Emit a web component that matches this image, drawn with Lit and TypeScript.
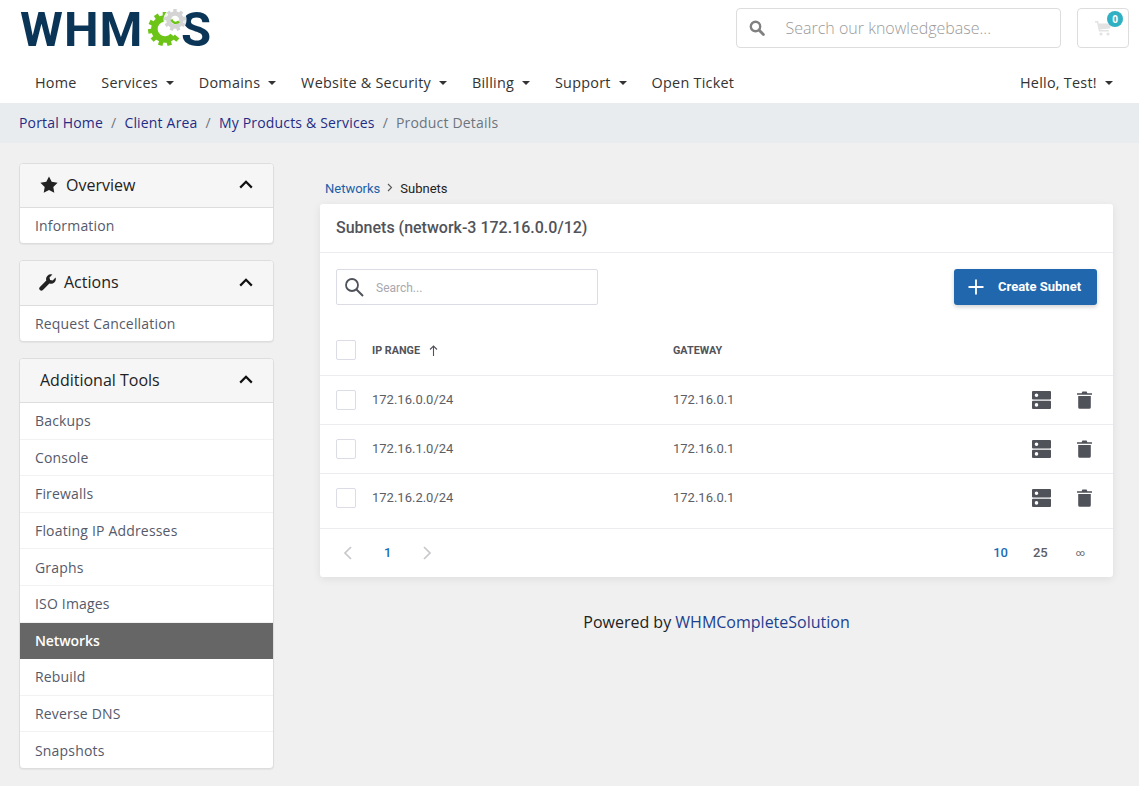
import { LitElement, html, css, svg } from "lit";
import { customElement } from "lit/decorators.js";

const caret = html`<span class="caret"></span>`;
const chevUp = html`<svg class="chev" viewBox="0 0 14 9" width="14" height="9"><path d="M1.200 7.600 7 1.800l5.800 5.800" fill="none" stroke="#111" stroke-width="2.200"/></svg>`;

function gear(cx: number, cy: number, r: number, teeth: number, toothLen: number, toothW: number, color: string, skipFrom = -1, skipTo = -1) {
  const ts = [];
  for (let i = 0; i < teeth; i++) {
    const a = (360 / teeth) * i;
    if (a >= skipFrom && a <= skipTo) continue;
    ts.push(svg`<rect x=${cx - toothW / 2} y=${cy - r - toothLen} width=${toothW} height=${toothLen + 2} fill=${color} transform="rotate(${a} ${cx} ${cy})"/>`);
  }
  return ts;
}

@customElement("app-root")
export class AppRoot extends LitElement {
  static styles = css`
    :host { display: block; min-height: 786px; background: #f0f0f0; font-family: "Open Sans", sans-serif; color: #333; font-size: 14px; overflow: hidden; }
    * { box-sizing: border-box; }
    .top { background: #fff; height: 103px; display: flex; flex-direction: column; }
    .brand { height: 66px; display: flex; align-items: flex-start; padding: 8px 10px 0 20px; }
    .logo { position: relative; width: 190px; height: 58px; margin-top: -7px; font-family: Roboto, sans-serif; font-weight: 700; font-size: 49px; color: #0b3557; line-height: 58px; letter-spacing: 1px; }
    .logo .whm { position: absolute; left: 0; top: 0; }
    .logo .s { position: absolute; left: 161px; top: 0; letter-spacing: 0; }
    .logo svg { position: absolute; left: 124px; top: 5px; }
    .spacer { flex: 1; }
    .ksearch { width: 325px; height: 40px; border: 1px solid #ddd; border-radius: 4px; display: flex; align-items: center; padding-left: 12px; gap: 20.500px; color: #9a9a9a; font-size: 16px; font-weight: 300; }
    .ksearch svg { flex: none; }
    .cart { position: relative; width: 52px; height: 40px; margin-left: 16px; border: 1px solid #ddd; border-radius: 4px; display: flex; align-items: center; padding-left: 17px; }
    .badge { position: absolute; left: 29px; top: 2px; width: 16px; height: 16px; border-radius: 50%; background: #2fb0c3; color: #fff; font-size: 10px; font-weight: 700; display: flex; align-items: center; justify-content: center; }
    nav { flex: 1; display: flex; align-items: center; padding: 0 26px 4px 35px; font-size: 14.400px; letter-spacing: .25px; color: #333; gap: 24.700px; }
    nav span.item { display: inline-flex; align-items: center; white-space: nowrap; }
    .caret { display: inline-block; margin-left: 8.200px; border-top: 4.500px solid #333; border-left: 4.500px solid transparent; border-right: 4.500px solid transparent; }
    .crumbs { height: 40px; background: #e9ecef; display: flex; align-items: center; padding: 0 0 2px 19px; font-size: 14px; letter-spacing: .18px; color: #6c757d; }
    .crumbs a { color: #1f2c85; }
    .crumbs i { font-style: normal; padding: 0 8px; color: #6c757d; }
    .body { display: flex; align-items: flex-start; padding: 20px 26px 0 19px; }
    aside { width: 255px; flex: none; display: flex; flex-direction: column; gap: 16px; }
    .panel { background: #fff; border: 1px solid #ddd; border-radius: 4px; box-shadow: 0 1px 1px rgba(0,0,0,.05); overflow: hidden; }
    .phead { height: 44px; background: #f6f6f6; border-bottom: 1px solid #ddd; display: flex; align-items: center; padding: 0 20px 2px; font-size: 16px; color: #222; }
    .phead.tall { height: 45px; }
    .phead svg.ico { margin-right: 8px; }
    .phead svg.wrench { margin-left: -1px; margin-right: 8px; }
    .phead .chev { margin-left: auto; }
    .row { height: 36.600px; display: flex; align-items: center; padding-left: 15px; font-size: 14px; letter-spacing: .18px; color: #555a6b; border-bottom: 1px solid #f2f2f2; }
    .row.short { height: 35px; }
    .row:last-child { height: 36px; border-bottom: none; }
    .row.short:last-child { height: 35px; }
    .row.on { background: #666; color: #fff; font-weight: 600; letter-spacing: -.1px; border-bottom: none; }
    main { flex: 1; margin-left: 46px; min-width: 0; }
    .lb { height: 41px; padding: 0 0 8px 5px; display: flex; align-items: flex-end; font-family: Roboto, sans-serif; font-size: 13px; color: #222; }
    .lb a { color: #1a5fa8; }
    .lb svg { margin: 0 7px 4px 7px; }
    .card { background: #fff; border-radius: 3px; box-shadow: 0 2px 8px rgba(0,0,0,.08); font-family: Roboto, sans-serif; color: #51535a; }
    .ctitle { height: 49px; border-bottom: 1px solid #ebebf0; display: flex; align-items: center; padding: 0 0 2px 16px; font-size: 16px; font-weight: 500; color: #51535a; }
    .tools { display: flex; justify-content: space-between; padding: 16px 16px 0; }
    .search { width: 262px; height: 36px; border: 1px solid #dcdce6; border-radius: 2px; display: flex; align-items: center; padding: 2px 0 0 7px; gap: 12px; font-size: 12px; color: #a8a8ae; }
    .search svg { margin-top: -3px; }
    .btn { width: 143px; height: 36px; background: #2167ae; border-radius: 3px; box-shadow: 0 2px 4px rgba(0,0,0,.18); color: #fff; font-size: 13px; font-weight: 700; display: flex; align-items: center; padding: 0 0 1px 14px; gap: 14px; }
    .tr { display: grid; grid-template-columns: 36px 301px 1fr auto; align-items: center; padding: 0 21px 0 16px; border-bottom: 1px solid #ebebf0; height: 49px; font-size: 13px; font-weight: 400; color: #5c5e66; }
    .tr .t { padding-bottom: 2px; }
    .tr.head { height: 51px; margin-top: 20px; font-size: 10.800px; font-weight: 700; color: #51535a; }
    .tr.last { height: 55px; padding-bottom: 6px; }
    .cb { width: 20px; height: 20px; border: 1px solid #dcdce6; border-radius: 2px; background: #fff; }
    .sort { display: inline-flex; align-items: center; gap: 9px; }
    .acts { display: flex; align-items: center; gap: 26px; }
    .pager { height: 48px; display: flex; align-items: center; padding: 0 28px 0 23px; font-size: 13px; font-weight: 500; color: #5c5e66; }
    .pager .n { color: #1a6cb5; margin: 0 32px 1px 32px; }
    .pager .sizes { margin: 0 0 1px auto; display: flex; gap: 25px; align-items: center; }
    .pager .act { color: #1a6cb5; }
    .pager .inf { font-size: 9px; font-weight: 400; margin-left: 3px; }
    .foot { text-align: center; margin-top: 34px; font-size: 16px; color: #222; line-height: 22px; }
    .foot a { color: #1d3f8f; }
  `;

  private trash() {
    return html`<svg width="15" height="18" viewBox="0 0 15 18"><path d="M0 2.200h4.600L5.400 .6h4.200l.8 1.600H15v1.600H0zM1.200 5h12.600v11.200a1.600 1.600 0 0 1-1.600 1.600H2.800a1.600 1.600 0 0 1-1.600-1.600z" fill="#50525a"/></svg>`;
  }
  private server() {
    return html`<svg width="19" height="18" viewBox="0 0 19 18"><path fill="#50525a" fill-rule="evenodd" d="M1 0h17a1 1 0 0 1 1 1v6.400a1 1 0 0 1-1 1H1a1 1 0 0 1-1-1V1a1 1 0 0 1 1-1zm3.500 2.400a1.800 1.800 0 1 0 0 3.600 1.800 1.800 0 0 0 0-3.600zM1 9.800h17a1 1 0 0 1 1 1V17a1 1 0 0 1-1 1H1a1 1 0 0 1-1-1v-6.200a1 1 0 0 1 1-1zm3.500 2.300a1.800 1.800 0 1 0 0 3.600 1.800 1.800 0 0 0 0-3.600z"/></svg>`;
  }

  render() {
    const nav = [["Home",0],["Services",1],["Domains",1],["Website & Security",1],["Billing",1],["Support",1],["Open Ticket",0]] as [string, number][];
    const tools = ["Backups","Console","Firewalls","Floating IP Addresses","Graphs","ISO Images","Networks","Rebuild","Reverse DNS","Snapshots"];
    const rows = ["172.16.0.0/24","172.16.1.0/24","172.16.2.0/24"];
    return html`
      <div class="top">
        <div class="brand">
          <div class="logo">
            <span class="whm">WHM</span>
            <svg width="50" height="44" viewBox="0 0 50 44">
              ${gear(21, 23, 13, 11, 4, 4.600, "#6cc516", 20, 110)}
              <path d="M27.700 15A10.500 10.500 0 1 0 29 29.700" fill="none" stroke="#6cc516" stroke-width="6.500"/>
            </svg>
            <span class="s">S</span>
            <svg width="50" height="44" viewBox="0 0 50 44">
              <circle cx="31" cy="14" r="11.500" fill="#fff" opacity=".9"/>
              ${gear(31, 14, 8, 9, 3, 3.400, "#d4d4d4")}
              <circle cx="31" cy="14" r="6.500" fill="none" stroke="#d4d4d4" stroke-width="4.500"/>
              <path d="M27.500 13.500c.8 3.500 4.500 4.500 7.500 2" fill="none" stroke="#6cc516" stroke-width="2.400"/>
            </svg>
          </div>
          <div class="spacer"></div>
          <div class="ksearch">
            <svg width="16" height="16" viewBox="0 0 16 16"><circle cx="6.500" cy="6.500" r="4.700" fill="none" stroke="#808080" stroke-width="2.400"/><path d="M10 10l4.400 4.400" stroke="#808080" stroke-width="2.800" stroke-linecap="round"/></svg>
            <span>Search our knowledgebase...</span>
          </div>
          <div class="cart">
            <svg width="17" height="15" viewBox="0 0 17 15"><path d="M0 .8h2.600l2 9h9.200" fill="none" stroke="#e3e3e3" stroke-width="1.500"/><path d="M3.500 2.500H16.500L15 7.600 4.600 8.600z" fill="#e3e3e3"/><circle cx="6" cy="13" r="1.600" fill="#e3e3e3"/><circle cx="13" cy="13" r="1.600" fill="#e3e3e3"/></svg>
            <span class="badge">0</span>
          </div>
        </div>
        <nav>
          ${nav.map(([t, c]) => html`<span class="item">${t}${c ? caret : ""}</span>`)}
          <span class="spacer"></span>
          <span class="item">Hello, Test!${caret}</span>
        </nav>
      </div>
      <div class="crumbs">
        <a>Portal Home</a><i>/</i><a>Client Area</a><i>/</i><a>My Products &amp; Services</a><i>/</i><span>Product Details</span>
      </div>
      <div class="body">
        <aside>
          <div class="panel">
            <div class="phead">
              <svg class="ico" width="18" height="17" viewBox="0 0 18 17"><path d="M9 .4l2.700 5.400 5.900.9-4.300 4.200 1 5.900L9 14.100l-5.300 2.700 1-5.900L.4 6.700l5.900-.9z" fill="#222"/></svg>
              Overview ${chevUp}
            </div>
            <div class="row short">Information</div>
          </div>
          <div class="panel">
            <div class="phead tall">
              <svg class="ico wrench" width="17" height="17" viewBox="0 0 17 17"><path d="M16.600 3.600l-2.900 2.900-2.600-.5-.6-2.600L13.400.5a4.800 4.800 0 0 0-6.100 6L.9 12.900a2.100 2.100 0 0 0 3 3l6.500-6.400a4.800 4.800 0 0 0 6.200-5.900z" fill="#222"/></svg>
              Actions ${chevUp}
            </div>
            <div class="row short">Request Cancellation</div>
          </div>
          <div class="panel">
            <div class="phead">Additional Tools ${chevUp}</div>
            ${tools.map((t) => html`<div class="row ${t === "Networks" ? "on" : ""}">${t}</div>`)}
          </div>
        </aside>
        <main>
          <div class="lb"><a>Networks</a>
            <svg width="6" height="9" viewBox="0 0 6 9"><path d="M1 1l3.500 3.500L1 8" fill="none" stroke="#555" stroke-width="1.100"/></svg>
            <span>Subnets</span></div>
          <div class="card">
            <div class="ctitle">Subnets (network-3 172.16.0.0/12)</div>
            <div class="tools">
              <div class="search">
                <svg width="20" height="20" viewBox="0 0 20 20"><circle cx="8" cy="8" r="6" fill="none" stroke="#50525a" stroke-width="1.800"/><path d="M12.500 12.500L19 19" stroke="#50525a" stroke-width="2"/></svg>
                <span>Search...</span>
              </div>
              <div class="btn">
                <svg width="16" height="16" viewBox="0 0 16 16"><path d="M8 .5v15M.5 8h15" stroke="#fff" stroke-width="1.800"/></svg>
                Create Subnet
              </div>
            </div>
            <div class="tr head">
              <span class="cb"></span>
              <span class="sort">IP RANGE
                <svg width="9" height="11" viewBox="0 0 9 11"><path d="M4.500 11V1M1 4.500l3.500-3.500L8 4.500" fill="none" stroke="#51535a" stroke-width="1.100"/></svg>
              </span>
              <span>GATEWAY</span><span></span>
            </div>
            ${rows.map((r, i) => html`
              <div class="tr ${i === 2 ? "last" : ""}">
                <span class="cb"></span><span class="t">${r}</span><span class="t">172.16.0.1</span>
                <span class="acts">${this.server()}${this.trash()}</span>
              </div>`)}
            <div class="pager">
              <svg width="9" height="14" viewBox="0 0 9 14"><path d="M8 1L2 7l6 6" fill="none" stroke="#c8c8cc" stroke-width="1.700"/></svg>
              <span class="n">1</span>
              <svg width="9" height="14" viewBox="0 0 9 14"><path d="M1 1l6 6-6 6" fill="none" stroke="#c8c8cc" stroke-width="1.700"/></svg>
              <span class="sizes"><span class="act">10</span><span>25</span><span class="inf">∞</span></span>
            </div>
          </div>
          <div class="foot">Powered by <a>WHMCompleteSolution</a></div>
        </main>
      </div>
    `;
  }
}
